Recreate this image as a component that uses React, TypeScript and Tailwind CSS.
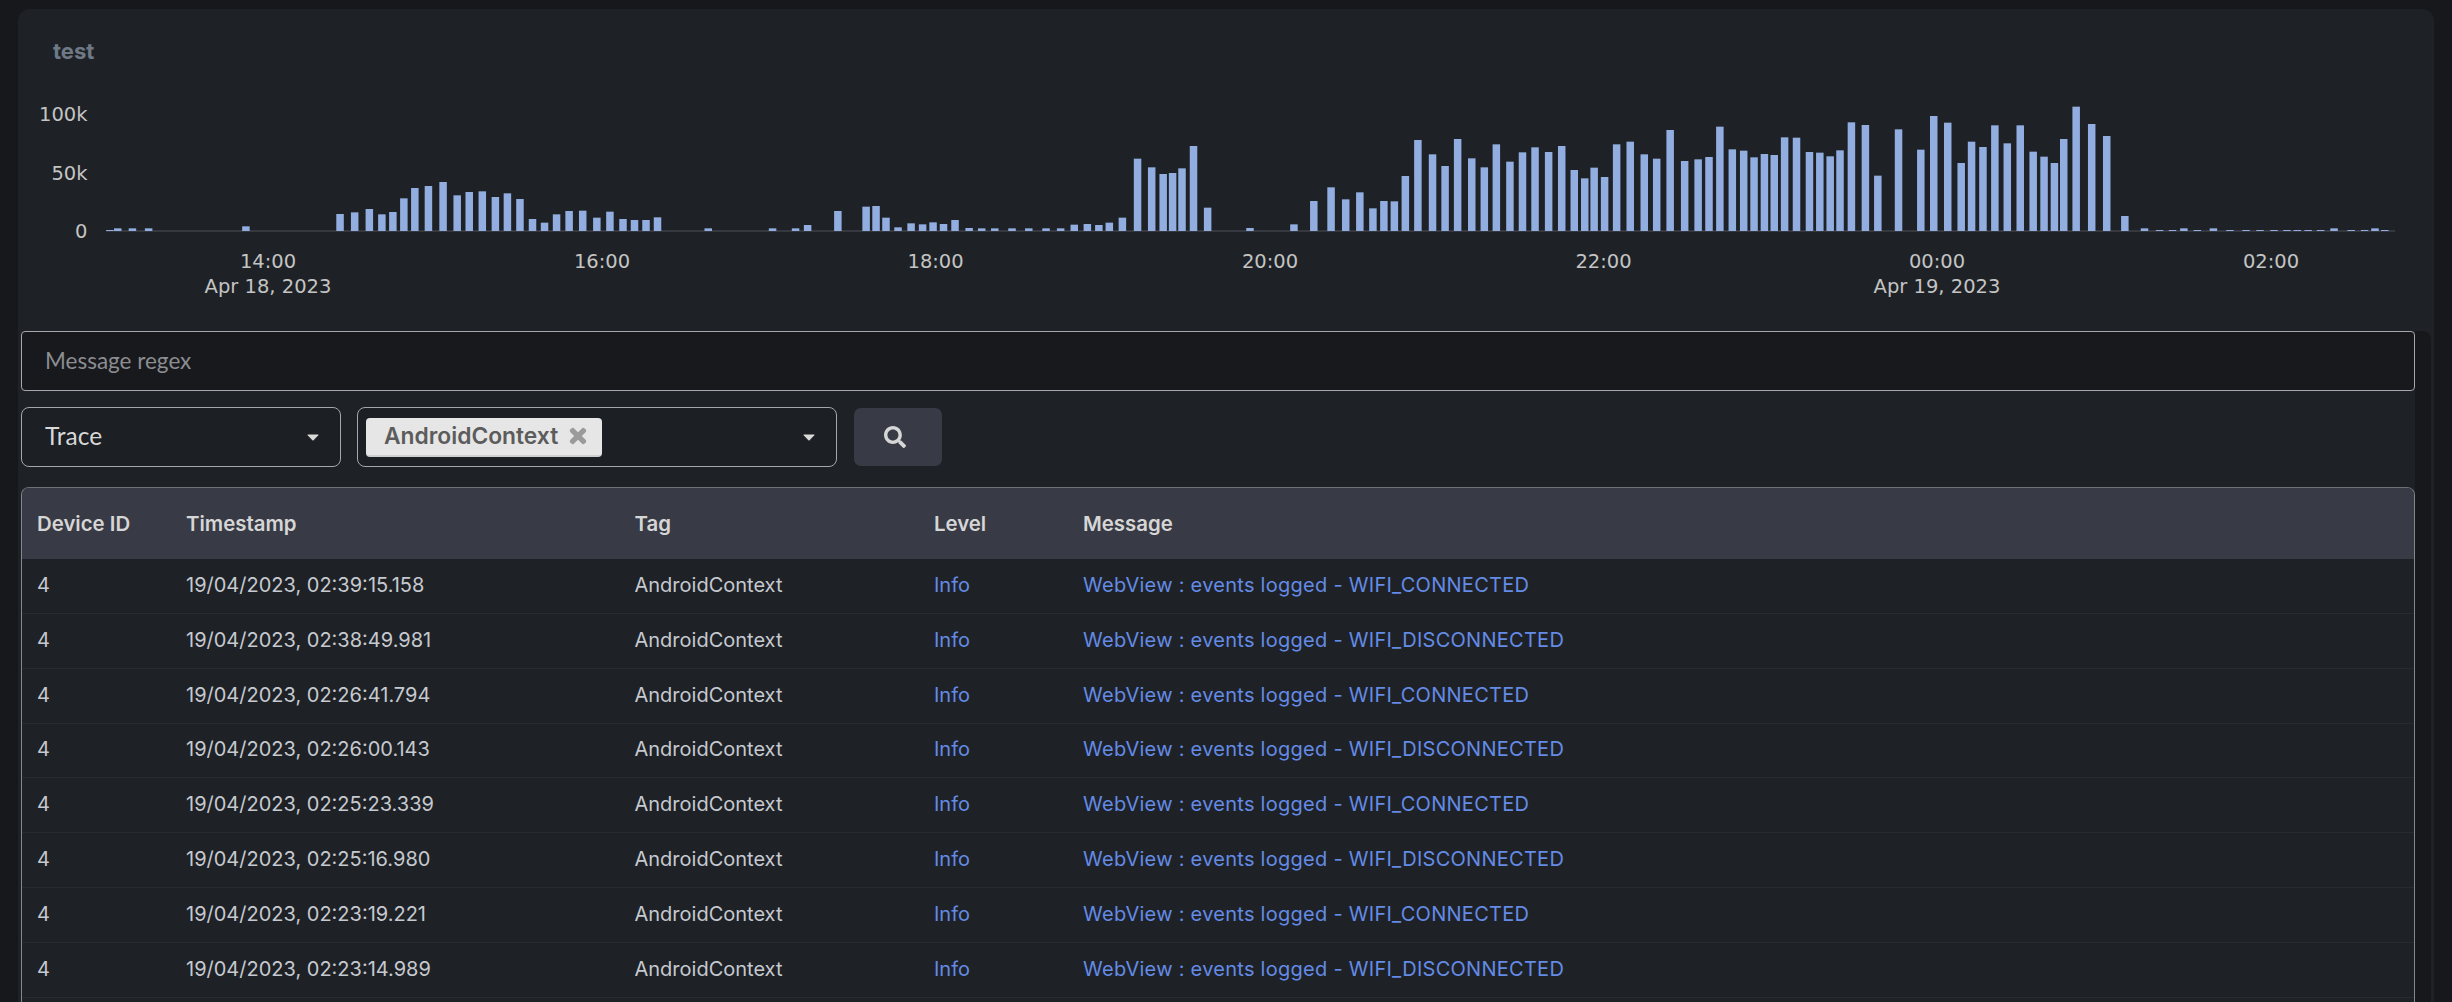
import React from "react";
import { FaSearch, FaTimes } from "react-icons/fa";

const z1: number[][] = [[203,690],[218,685],[246,685],[277,685],[463,679],[643,642],[671,637],[699,627],[723,643],[744,636],[765,595],[786,564],[812,558],[840,546],[867,586],[890,576],[915,574],[940,591],[963,580],[987,597],[1011,657],[1034,668],[1057,643],[1081,633],[1107,632],[1134,653],[1159,635],[1184,657],[1206,660],[1228,660],[1250,652],[1347,685],[1470,685],[1514,685],[1537,675]];
const z2: number[][] = [[27,633],[81,620],[100,618],[119,653],[142,682],[167,670],[189,673],[209,667],[229,672],[251,660],[278,684],[302,685],[327,685],[360,685],[392,685],[425,685],[453,685],[479,674],[504,672],[526,675],[546,668],[571,653],[600,476],[627,502],[649,522],[667,519],[685,505],[707,438],[734,623],[815,684],[899,673],[937,603],[970,562],[998,598],[1025,577],[1050,625],[1071,603],[1091,604],[1112,528],[1136,420],[1164,463],[1188,498],[1212,417],[1239,475],[1263,502],[1286,433],[1312,485],[1336,457],[1360,442],[1386,456],[1411,438],[1435,510],[1455,535],[1473,503],[1493,531],[1516,433],[1542,425]];
const z3: number[][] = [[1,463],[25,476],[51,390],[79,483],[105,478],[126,471],[147,380],[171,448],[193,452],[213,472],[233,462],[252,465],[272,412],[295,413],[320,456],[340,458],[360,469],[379,451],[401,367],[428,375],[452,527],[492,388],[535,449],[560,348],[587,368],[613,489],[633,425],[655,441],[678,376],[702,430],[727,376],[752,455],[773,470],[793,489],[811,417],[835,320],[865,372],[894,408],[929,648],[967,685],[996,690],[1021,690],[1043,685],[1069,690],[1100,685],[1132,690],[1163,690],[1190,690],[1217,690],[1242,690],[1262,690],[1283,690],[1307,690],[1333,685],[1366,690],[1392,690],[1412,685],[1431,690]];

const bars = [
  ...z1.map(([x, t]) => [x / 1.912, t]),
  ...z2.map(([x, t]) => [820 + x / 1.912, t]),
  ...z3.map(([x, t]) => [1640 + x / 1.931, t]),
].map(([x, t]) => ({ x, y: t / 3, h: (693 - t) / 3 }));

const ticks: [number, string, string?][] = [
  [268, "14:00", "Apr 18, 2023"],
  [602, "16:00"],
  [935.6, "18:00"],
  [1270, "20:00"],
  [1603.5, "22:00"],
  [1937, "00:00", "Apr 19, 2023"],
  [2271, "02:00"],
];

const rows: [string, string][] = [
  ["19/04/2023, 02:39:15.158", "WIFI_CONNECTED"],
  ["19/04/2023, 02:38:49.981", "WIFI_DISCONNECTED"],
  ["19/04/2023, 02:26:41.794", "WIFI_CONNECTED"],
  ["19/04/2023, 02:26:00.143", "WIFI_DISCONNECTED"],
  ["19/04/2023, 02:25:23.339", "WIFI_CONNECTED"],
  ["19/04/2023, 02:25:16.980", "WIFI_DISCONNECTED"],
  ["19/04/2023, 02:23:19.221", "WIFI_CONNECTED"],
  ["19/04/2023, 02:23:14.989", "WIFI_DISCONNECTED"],
];

function Caret() {
  return (
    <svg width="12" height="7" viewBox="0 0 12 7" className="shrink-0">
      <path d="M1 0.5 H11 Q11.8 0.5 11.3 1.2 L6.6 6.3 Q6 6.9 5.4 6.3 L0.7 1.2 Q0.2 0.5 1 0.5 Z" fill="#d9d9d9" />
    </svg>
  );
}

function Chart() {
  const labelFont = "'DejaVu Sans', sans-serif";
  return (
    <svg viewBox="18 9 2416 322" className="block w-[2416px] h-[322px] shrink-0">
      <text x="53" y="59" fontFamily="Inter, sans-serif" fontWeight="700" fontSize="22" fill="#6f7986">test</text>
      {[["100k", 120.7], ["50k", 180], ["0", 237.7]].map(([t, y]) => (
        <text key={t as string} x="87.5" y={y as number} textAnchor="end" fontFamily={labelFont} fontSize="19.5" fill="#c4c4c4">{t}</text>
      ))}
      <rect x="106" y="230.5" width="2289" height="1" fill="#4c4f57" />
      {bars.map((b, i) => (
        <rect key={i} x={b.x} y={b.y} width="7.5" height={b.h} fill="#92aee0" />
      ))}
      {ticks.map(([x, t, d]) => (
        <g key={t} fontFamily={labelFont} fontSize="19.5" fill="#c4c4c4" textAnchor="middle">
          <text x={x} y="267.7">{t}</text>
          {d && <text x={x} y="292.7">{d}</text>}
        </g>
      ))}
    </svg>
  );
}

const cols = "grid grid-cols-[149px_448.5px_299.5px_149px_1fr]";

export default function App() {
  return (
    <div className="h-[1002px] overflow-hidden bg-[#17181c] pt-[9px] pl-[18px] font-['Inter',sans-serif]">
      <div className="flex h-[993px] w-[2416px] flex-col overflow-hidden rounded-t-[12px] bg-[#1e2226]">
        <Chart />
        <div className="flex min-h-0 flex-1 pr-[3px]">
          <div className="flex min-w-0 flex-1 flex-col pl-[3px]">
            <input
              placeholder="Message regex"
              className="h-[60px] w-full shrink-0 rounded-[4px] border border-[#a6a7ae] bg-[#18191d] px-[23px] pb-[2px] font-['Lato',sans-serif] text-[22.5px] text-[#d8d8d8] placeholder:text-[#8b8d91] outline-none"
            />
            <div className="mt-[16px] flex h-[60px] shrink-0 items-stretch">
              <div className="flex w-[320px] items-center justify-between rounded-[8px] border border-[#a6a7ae] bg-[#1c1f23] pl-[23px] pr-[21px] font-['Lato',sans-serif] text-[24.5px] text-[#d8d8d8]">
                <span className="pb-[2px]">Trace</span>
                <Caret />
              </div>
              <div className="ml-[16px] flex w-[480px] items-center justify-between rounded-[8px] border border-[#a6a7ae] bg-[#1c1f23] pl-[8px] pr-[21px]">
                <div className="flex h-[39px] w-[236px] items-center gap-[9px] rounded-[4px] border-b-2 border-[#cfcfcf] bg-[#e6e6e6] pl-[18px] text-[22.8px] font-semibold text-[#5c5c5c]">
                  <span>AndroidContext</span>
                  <FaTimes className="text-[22px] text-[#9b9b9b] stroke-[30px]" />
                </div>
                <Caret />
              </div>
              <button className="my-px ml-[17px] flex w-[88px] items-center rounded-[7px] bg-[#383b45] pl-[30px]">
                <FaSearch className="text-[22px] text-[#d6d6d6]" />
              </button>
            </div>
            <div className="mt-[20px] min-h-0 flex-1 overflow-hidden rounded-t-[8px] border-x border-t border-x-[#85878c] border-t-[#6f7176] text-[20px]">
              <div className={`${cols} h-[71px] items-center bg-[#383b45] pt-[1px] pl-[15px] text-[20.4px] font-semibold text-[#d6d6d6]`}>
                <div>Device ID</div>
                <div>Timestamp</div>
                <div>Tag</div>
                <div>Level</div>
                <div>Message</div>
              </div>
              {rows.map(([ts, ev]) => (
                <div key={ts} className={`${cols} h-[54.85px] items-center border-b border-[#2a2b30] pb-[2px] pl-[15px] text-[#c6c9d0]`}>
                  <div>4</div>
                  <div>{ts}</div>
                  <div>AndroidContext</div>
                  <div className="text-[#648be6]">Info</div>
                  <div className="tracking-[0.27px] text-[#648be6]">WebView : events logged - {ev}</div>
                </div>
              ))}
            </div>
          </div>
          <div className="w-[16px] shrink-0 rounded-tr-[8px] bg-[#17181c]" />
        </div>
      </div>
    </div>
  );
}
